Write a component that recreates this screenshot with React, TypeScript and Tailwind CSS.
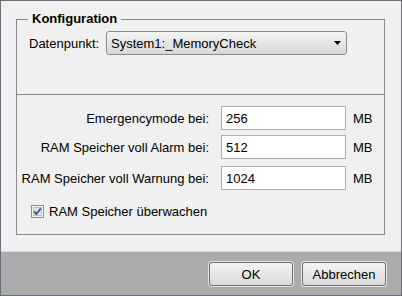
import React from "react";

const font = { fontFamily: '"Liberation Sans", Arial, sans-serif' };

function NumberRow({ label, value, mt }: { label: string; value: string; mt: string }) {
  return (
    <div className={`flex items-center ${mt}`}>
      <div className="w-[192px] text-right">{label}</div>
      <div className="ml-[12px] flex h-[24px] w-[125px] items-center border border-[#abadb3] bg-white pl-[4px]">
        {value}
      </div>
      <div className="ml-[7px]">MB</div>
    </div>
  );
}

function Checkbox() {
  return (
    <svg width="13" height="13" viewBox="0 0 13 13">
      <rect x="0.5" y="0.5" width="12" height="12" fill="#f4f4f4" stroke="#8f8f8f" />
      <rect x="2.5" y="2.5" width="8" height="8" fill="#e3e3e3" stroke="#c0c0c0" />
      <path d="M3.2 6.4 L5.4 9 L9.8 3.4" fill="none" stroke="#3c5a94" strokeWidth="1.8" />
    </svg>
  );
}

function DialogButton({ children }: { children: React.ReactNode }) {
  return (
    <button className="flex h-[24px] w-[84px] items-center justify-center rounded-[3px] border border-[#707070] bg-linear-to-b from-[#f4f4f4] to-[#d9d9d9] text-[13px] text-black shadow-[0_0_0_1px_#e4e4e4]">
      {children}
    </button>
  );
}

export default function App() {
  return (
    <div
      className="flex h-[296px] w-[402px] flex-col border border-[#6b7078] bg-[#f0f0f0] text-[13px] leading-none text-black"
      style={font}
    >
      <div className="pl-[15px] pr-[16px] pt-[18px]">
        <div className="relative flex h-[216px] flex-col border border-[#8a8a8a]">
          <span className="absolute left-[11px] top-[-8px] bg-[#f0f0f0] px-[4px] font-bold">Konfiguration</span>

          <div className="h-[75px] border-b border-[#8a8a8a] pl-[12px] pt-[11px]">
            <div className="flex items-center">
              <div className="w-[77px]">Datenpunkt:</div>
              <div className="flex h-[24px] w-[241px] items-center justify-between rounded-[3px] border border-[#8b8b8b] bg-linear-to-b from-[#f4f4f4] to-[#d8d8d8] pl-[4px] pr-[5px]">
                <span>System1:_MemoryCheck</span>
                <svg width="7" height="4" viewBox="0 0 7 4">
                  <path d="M0 0 H7 L3.5 4 Z" fill="#000" />
                </svg>
              </div>
            </div>
          </div>

          <NumberRow label="Emergencymode bei:" value="256" mt="mt-[11px]" />
          <NumberRow label="RAM Speicher voll Alarm bei:" value="512" mt="mt-[5px]" />
          <NumberRow label="RAM Speicher voll Warnung bei:" value="1024" mt="mt-[7px]" />

          <div className="ml-[14px] mt-[15px] flex h-[13px] items-center gap-[5px]">
            <Checkbox />
            <span>RAM Speicher überwachen</span>
          </div>
        </div>
      </div>

      <div className="mt-auto flex h-[44px] items-start justify-end gap-[9px] border-t border-[#d6d6d6] bg-[#ababab] pr-[15px] pt-[10px]">
        <DialogButton>OK</DialogButton>
        <DialogButton>Abbrechen</DialogButton>
      </div>
    </div>
  );
}
